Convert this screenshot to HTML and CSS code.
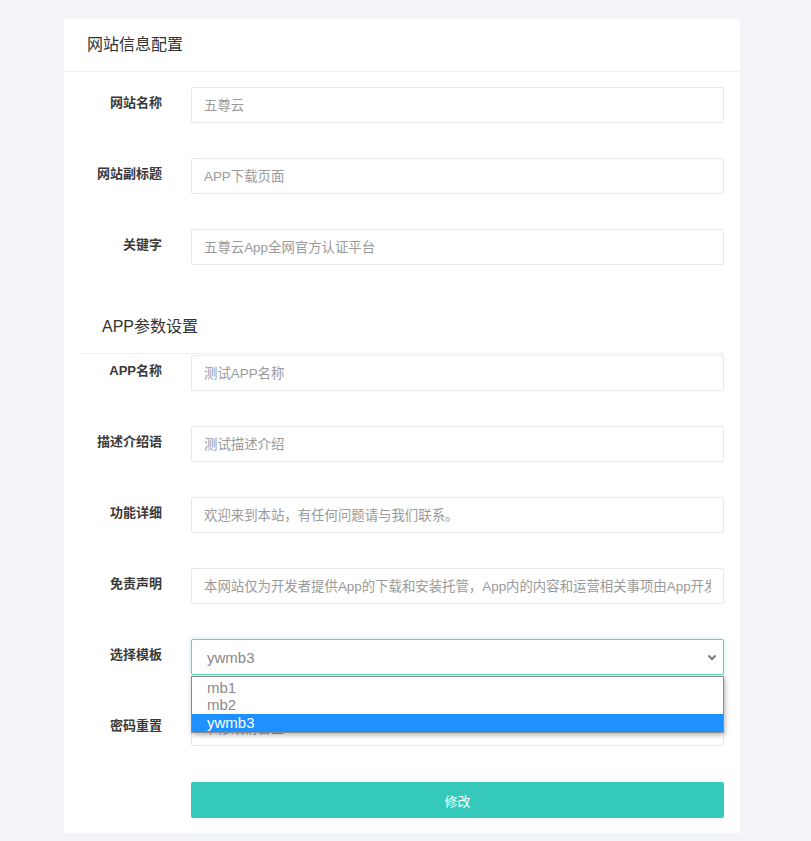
FILE: index.html
```html
<!DOCTYPE html>
<html lang="zh-CN">

<head>
    <meta charset="UTF-8">
    <link rel="stylesheet" href="styles.css">
</head>

<body>
    <div class="wrap">
        <div class="card">
            <div class="card-head">网站信息配置</div>
            <div class="form">
                <div class="row">
                    <label class="label">网站名称</label>
                    <div class="field"><input class="input" placeholder="五尊云" /></div>
                </div>
                <div class="row">
                    <label class="label">网站副标题</label>
                    <div class="field"><input class="input" placeholder="APP下载页面" /></div>
                </div>
                <div class="row">
                    <label class="label">关键字</label>
                    <div class="field"><input class="input" placeholder="五尊云App全网官方认证平台" /></div>
                </div>

                <div class="sub-title">APP参数设置</div>

                <div class="row">
                    <label class="label">APP名称</label>
                    <div class="field"><input class="input" placeholder="测试APP名称" /></div>
                </div>
                <div class="row">
                    <label class="label">描述介绍语</label>
                    <div class="field"><input class="input" placeholder="测试描述介绍" /></div>
                </div>
                <div class="row">
                    <label class="label">功能详细</label>
                    <div class="field"><input class="input" placeholder="欢迎来到本站，有任何问题请与我们联系。" /></div>
                </div>
                <div class="row">
                    <label class="label">免责声明</label>
                    <div class="field"><input class="input" placeholder="本网站仅为开发者提供App的下载和安装托管，App内的内容和运营相关事项由App开发者负责" /></div>
                </div>
                <div class="row">
                    <label class="label">选择模板</label>
                    <div class="field select-box">
                        <div class="select">
                            <span>ywmb3</span>
                            <svg width="10" height="7" viewBox="0 0 10 7">
                                <path d="M1.5 1.5 L5 5 L8.5 1.5" fill="none" stroke="#777" stroke-width="2" />
                            </svg>
                        </div>
                        <ul class="options">
                            <li>mb1</li>
                            <li>mb2</li>
                            <li class="active">ywmb3</li>
                        </ul>
                    </div>
                </div>
                <div class="row">
                    <label class="label">密码重置</label>
                    <div class="field"><input class="input" placeholder="不修改请留空" /></div>
                </div>
                <div class="row last">
                    <div class="label"></div>
                    <div class="field"><button class="btn">修改</button></div>
                </div>
            </div>
        </div>
    </div>
</body>

</html>
```

FILE: styles.css
```css
body {
    margin: 0;
    background-color: #f3f4f8;
    font-family: "Liberation Sans", "Noto Sans CJK SC", sans-serif;
    color: #333;
}

.wrap {
    padding: 19px 71px 8px 64px;
}

.card {
    background-color: #fff;
}

.card-head {
    height: 52px;
    line-height: 52px;
    padding-left: 23px;
    font-size: 16px;
    border-bottom: 1px solid #f0f0f0;
}

.form {
    padding: 15px 16px 15px 16px;
}

.row {
    display: flex;
    margin-bottom: 35px;
}

.row.last {
    padding-top: 1px;
    margin-bottom: 0;
}

.label {
    width: 82px;
    flex-shrink: 0;
    padding-right: 29px;
    padding-top: 6px;
    line-height: 20px;
    text-align: right;
    font-size: 13px;
    font-weight: bold;
    color: #3a3a3a;
}

.row.last .label {
    padding-top: 0;
}

.field {
    flex: 1;
    min-width: 0;
}

.input {
    display: block;
    width: 100%;
    height: 36px;
    box-sizing: border-box;
    border: 1px solid #e8e8e8;
    border-radius: 2px;
    padding: 0 12px;
    font-size: 13.4px;
    font-family: inherit;
    outline: none;
}

.input::placeholder {
    color: #9a9a9a;
}

.sub-title {
    margin: 0 0 1px 0;
    padding: 17px 0 16px 22px;
    line-height: 20px;
    font-size: 16px;
    border-bottom: 1px solid #eee;
}

.sub-title+.row .input {
    border-top-color: #eee;
}

.select-box {
    position: relative;
}

.select {
    height: 36px;
    box-sizing: border-box;
    border: 1px solid #5fd3c6;
    border-radius: 2px;
    box-shadow: 0 0 4px rgba(54, 201, 187, 0.35);
    display: flex;
    align-items: center;
    justify-content: space-between;
    padding: 0 6px 0 15px;
    font-size: 15px;
    color: #888;
}

.options {
    position: absolute;
    left: 0;
    right: 0;
    top: 37px;
    margin: 0;
    padding: 0;
    list-style: none;
    background-color: #fff;
    border: 1px solid #8c8c8c;
    box-shadow: 1px 2px 5px rgba(0, 0, 0, 0.3);
    z-index: 2;
}

.options li {
    height: 18px;
    line-height: 18px;
    padding-left: 15px;
    font-size: 15px;
    color: #8a8a8a;
}

.options li:first-child {
    height: 19px;
    line-height: 21px;
}

.options li.active {
    background-color: #1e90ff;
    color: #fff;
}

.btn {
    display: block;
    width: 100%;
    height: 36px;
    border: none;
    border-radius: 2px;
    background-color: #35c9bb;
    color: #fff;
    font-size: 13px;
    font-family: inherit;
    cursor: pointer;
}
```
